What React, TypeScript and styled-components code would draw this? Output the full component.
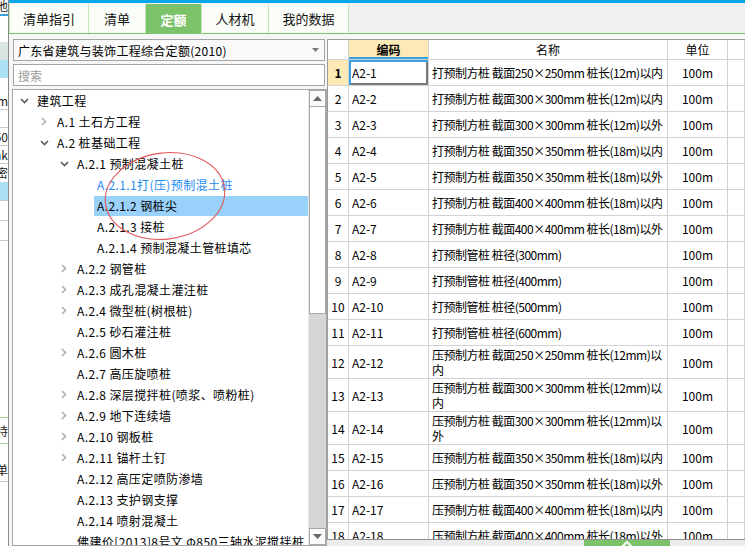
import * as React from 'react';
import styled, { createGlobalStyle } from 'styled-components';

const GlobalStyle = createGlobalStyle`
  html, body {
    margin: 0;
    padding: 0;
  }
  body {
    font-family: "Noto Sans CJK SC", "Liberation Sans", sans-serif;
    font-size: 12px;
    color: #000;
    background: #f0f0f0;
  }
  * {
    box-sizing: border-box;
  }
`;

const Screen = styled.div`
  position: relative;
  display: flex;
  width: 745px;
  height: 546px;
  overflow: hidden;
  background: #f0f0f0;
`;

/* sliver of the window behind, on the far left */
const Strip = styled.div`
  width: 9px;
  flex-shrink: 0;
  display: flex;
  flex-direction: column;
  overflow: hidden;
  background: #fff;
  border-right: 1px solid #8a8a8a;
`;

const StripCell = styled.div<{ $h: number; $bg?: string; $line?: string }>`
  height: ${(p) => p.$h}px;
  flex-shrink: 0;
  display: flex;
  justify-content: flex-end;
  align-items: center;
  background: ${(p) => p.$bg || 'transparent'};
  border-bottom: ${(p) => (p.$line ? `1px solid ${p.$line}` : 'none')};
  font-size: 12px;
  line-height: 12px;
  white-space: nowrap;
  color: #222;
  & > span {
    flex-shrink: 0;
  }
`;

const Main = styled.div`
  flex: 1;
  min-width: 0;
  display: flex;
  flex-direction: column;
`;

const TopBar = styled.div`
  height: 3px;
  flex-shrink: 0;
  background: #09a6ea;
`;

const TabBar = styled.div`
  display: flex;
  height: 31px;
  flex-shrink: 0;
  padding-top: 1px;
  background: #f0f0f0;
  border-bottom: 1px solid #78c463;
`;

const Tab = styled.div<{ $active?: boolean; $w: number }>`
  width: ${(p) => p.$w}px;
  display: flex;
  align-items: center;
  justify-content: center;
  font-size: 13px;
  font-weight: ${(p) => (p.$active ? 700 : 400)};
  color: ${(p) => (p.$active ? '#fff' : '#111')};
  background: ${(p) => (p.$active ? '#7cc268' : '#fafdf8')};
  border-right: 1px solid #c4e6b6;
  margin-bottom: ${(p) => (p.$active ? '-1px' : '0')};
  &:first-child {
    border-left: 1px solid #c4e6b6;
  }
`;

const Content = styled.div`
  flex: 1;
  min-height: 0;
  display: flex;
  background: #f6f6f6;
`;

const LeftPanel = styled.div`
  width: 318px;
  flex-shrink: 0;
  display: flex;
  flex-direction: column;
  gap: 3px;
  padding: 5px 0 0 3px;
`;

const Field = styled.div<{ $placeholder?: boolean }>`
  height: 22px;
  flex-shrink: 0;
  margin: 0 2px 0 1px;
  display: flex;
  align-items: center;
  justify-content: space-between;
  padding: 0 5px 0 4px;
  border: 1px solid #a5a5a5;
  background: ${(p) => (p.$placeholder ? '#fff' : '#f9f9f9')};
  color: ${(p) => (p.$placeholder ? '#9a9a9a' : '#000')};
  font-size: 12px;
  letter-spacing: ${(p) => (p.$placeholder ? 0 : 0.3)}px;
`;

const TreeBox = styled.div`
  flex: 1;
  min-height: 0;
  display: flex;
  border: 1px solid #a5a5a5;
  background: #fff;
`;

const TreeList = styled.div`
  flex: 1;
  min-width: 0;
  overflow: hidden;
`;

const TreeRow = styled.div<{ $level: number }>`
  height: 21px;
  display: flex;
  align-items: center;
  padding-left: ${(p) => 4 + p.$level * 20}px;
  white-space: nowrap;
`;

const Toggle = styled.span`
  width: 14px;
  height: 21px;
  flex-shrink: 0;
  display: flex;
  align-items: center;
  justify-content: center;
`;

const Label = styled.span<{ $tone?: 'link' | 'selected' }>`
  flex: 1;
  height: 20px;
  margin-left: 3px;
  padding-left: 3px;
  display: flex;
  align-items: center;
  font-size: 12px;
  letter-spacing: 0.4px;
  color: ${(p) => (p.$tone === 'link' ? '#1d8bf0' : '#000')};
  background: ${(p) => (p.$tone === 'selected' ? '#99d1fb' : 'transparent')};
`;

const ScrollBar = styled.div`
  width: 18px;
  flex-shrink: 0;
  display: flex;
  flex-direction: column;
  background: #d6d6d6;
  border-left: 1px solid #e8e8e8;
`;

const ScrollButton = styled.div`
  height: 17px;
  flex-shrink: 0;
  display: flex;
  align-items: center;
  justify-content: center;
  background: #fbfbfb;
  border: 1px solid #a8a8a8;
`;

const Thumb = styled.div`
  height: 207px;
  flex-shrink: 0;
  background: #fff;
  border: 1px solid #a8a8a8;
  border-top: none;
`;

const Track = styled.div`
  flex: 1;
`;

const TablePanel = styled.div`
  flex: 1;
  min-width: 0;
  display: flex;
  flex-direction: column;
  padding-top: 5px;
`;

const Grid = styled.div`
  flex: 1;
  min-height: 0;
  overflow: hidden;
  background: #fff;
  border-top: 1px solid #9c9c9c;
  border-left: 1px solid #9c9c9c;
`;

const Row = styled.div<{ $h: number }>`
  display: grid;
  grid-template-columns: 21px 80px 239px 60px 1fr;
  height: ${(p) => p.$h}px;
`;

const Cell = styled.div<{
  $align?: 'left' | 'center';
  $bg?: string;
  $bold?: boolean;
  $focus?: boolean;
  $underline?: boolean;
  $tight?: boolean;
}>`
  display: flex;
  align-items: center;
  justify-content: ${(p) => (p.$align === 'center' ? 'center' : 'flex-start')};
  padding-left: ${(p) => (p.$align === 'center' ? 0 : 3)}px;
  border-right: 1px solid #d2d2d2;
  border-bottom: 1px solid #d2d2d2;
  background: ${(p) => p.$bg || '#fff'};
  font-weight: ${(p) => (p.$bold ? 700 : 400)};
  font-size: 12px;
  line-height: 15px;
  letter-spacing: ${(p) => (p.$tight ? -0.5 : 0)}px;
  white-space: pre;
  overflow: hidden;
  box-shadow: ${(p) =>
    p.$focus
      ? 'inset 2px 2px 0 #3ba0e0, inset -2px -2px 0 #7a7a7a'
      : p.$underline
      ? 'inset 0 -2px 0 #3ba0e0'
      : 'none'};
`;

const Footer = styled.div`
  height: 7px;
  flex-shrink: 0;
  display: flex;
  padding-left: 257px;
  background: #ececec;
  border-top: 1px solid #8e8e8e;
`;

const FooterTab = styled.div`
  width: 86px;
  display: flex;
  justify-content: center;
  background: #7cc268;
  overflow: hidden;
`;

const Annotation = styled.svg`
  position: absolute;
  left: 100px;
  top: 148px;
  pointer-events: none;
`;

type TreeNode = {
  level: number;
  label: string;
  toggle?: 'open' | 'closed';
  tone?: 'link' | 'selected';
};

const tree: TreeNode[] = [
  { level: 0, label: '建筑工程', toggle: 'open' },
  { level: 1, label: 'A.1 土石方工程', toggle: 'closed' },
  { level: 1, label: 'A.2 桩基础工程', toggle: 'open' },
  { level: 2, label: 'A.2.1 预制混凝土桩', toggle: 'open' },
  { level: 3, label: 'A.2.1.1打(压)预制混土桩', tone: 'link' },
  { level: 3, label: 'A.2.1.2 钢桩尖', tone: 'selected' },
  { level: 3, label: 'A.2.1.3 接桩' },
  { level: 3, label: 'A.2.1.4 预制混凝土管桩填芯' },
  { level: 2, label: 'A.2.2 钢管桩', toggle: 'closed' },
  { level: 2, label: 'A.2.3 成孔混凝土灌注桩', toggle: 'closed' },
  { level: 2, label: 'A.2.4 微型桩(树根桩)', toggle: 'closed' },
  { level: 2, label: 'A.2.5 砂石灌注桩' },
  { level: 2, label: 'A.2.6 圆木桩', toggle: 'closed' },
  { level: 2, label: 'A.2.7 高压旋喷桩' },
  { level: 2, label: 'A.2.8 深层搅拌桩(喷浆、喷粉桩)', toggle: 'closed' },
  { level: 2, label: 'A.2.9 地下连续墙', toggle: 'closed' },
  { level: 2, label: 'A.2.10 钢板桩', toggle: 'closed' },
  { level: 2, label: 'A.2.11 锚杆土钉', toggle: 'closed' },
  { level: 2, label: 'A.2.12 高压定喷防渗墙' },
  { level: 2, label: 'A.2.13 支护钢支撑' },
  { level: 2, label: 'A.2.14 喷射混凝土' },
  { level: 2, label: '佛建价[2013]8号文 Φ850三轴水泥搅拌桩' },
];

type Quota = { code: string; name: string; tall?: boolean };

const quotas: Quota[] = [
  { code: 'A2-1', name: '打预制方桩 截面250×250mm 桩长(12m)以内' },
  { code: 'A2-2', name: '打预制方桩 截面300×300mm 桩长(12m)以内' },
  { code: 'A2-3', name: '打预制方桩 截面300×300mm 桩长(12m)以外' },
  { code: 'A2-4', name: '打预制方桩 截面350×350mm 桩长(18m)以内' },
  { code: 'A2-5', name: '打预制方桩 截面350×350mm 桩长(18m)以外' },
  { code: 'A2-6', name: '打预制方桩 截面400×400mm 桩长(18m)以内' },
  { code: 'A2-7', name: '打预制方桩 截面400×400mm 桩长(18m)以外' },
  { code: 'A2-8', name: '打预制管桩 桩径(300mm)' },
  { code: 'A2-9', name: '打预制管桩 桩径(400mm)' },
  { code: 'A2-10', name: '打预制管桩 桩径(500mm)' },
  { code: 'A2-11', name: '打预制管桩 桩径(600mm)' },
  { code: 'A2-12', name: '压预制方桩 截面250×250mm 桩长(12mm)以\n内', tall: true },
  { code: 'A2-13', name: '压预制方桩 截面300×300mm 桩长(12mm)以\n内', tall: true },
  { code: 'A2-14', name: '压预制方桩 截面300×300mm 桩长(12mm)以\n外', tall: true },
  { code: 'A2-15', name: '压预制方桩 截面350×350mm 桩长(18m)以内' },
  { code: 'A2-16', name: '压预制方桩 截面350×350mm 桩长(18m)以外' },
  { code: 'A2-17', name: '压预制方桩 截面400×400mm 桩长(18m)以内' },
  { code: 'A2-18', name: '压预制方桩 截面400×400mm 桩长(18m)以外' },
];

const tabs = [
  { label: '清单指引', w: 80 },
  { label: '清单', w: 57 },
  { label: '定额', w: 56, active: true },
  { label: '人材机', w: 67 },
  { label: '我的数据', w: 80 },
];

const Chevron = ({ open }: { open: boolean }) =>
  open ? (
    <svg width="9" height="6" viewBox="0 0 9 6">
      <polyline points="1,1 4.5,4.5 8,1" fill="none" stroke="#5a5a5a" strokeWidth="1.6" />
    </svg>
  ) : (
    <svg width="6" height="9" viewBox="0 0 6 9">
      <polyline points="1,1 4.5,4.5 1,8" fill="none" stroke="#b0b0b0" strokeWidth="1.6" />
    </svg>
  );

const Arrow = ({ up, color = '#666', w = 9 }: { up?: boolean; color?: string; w?: number }) => (
  <svg width={w} height={w / 2 + 0.5} viewBox="0 0 9 5">
    <polygon points={up ? '0,5 4.5,0 9,5' : '0,0 9,0 4.5,5'} fill={color} />
  </svg>
);

const App = () => {
  return (
    <Screen>
      <GlobalStyle />
      <Strip>
        <StripCell $h={12}>
          <span>其他</span>
        </StripCell>
        <StripCell $h={2} />
        <StripCell $h={2} $bg="#3aa0e0" />
        <StripCell $h={26} />
        <StripCell $h={18} $bg="#dae4e0" />
        <StripCell $h={18} $bg="#ade2f4" />
        <StripCell $h={14} />
        <StripCell $h={18} $line="#c9c9c9">
          <span>mm</span>
        </StripCell>
        <StripCell $h={18} $line="#c9c9c9" />
        <StripCell $h={18} $line="#c9c9c9">
          <span>50</span>
        </StripCell>
        <StripCell $h={18} $line="#c9c9c9">
          <span>nk</span>
        </StripCell>
        <StripCell $h={18}>
          <span>密</span>
        </StripCell>
        <StripCell $h={19} $bg="#ade2f4" $line="#c9c9c9" />
        <StripCell $h={20} $line="#c9c9c9" />
        <StripCell $h={20} $line="#c9c9c9" />
        <StripCell $h={177} $line="#9fd68d" />
        <StripCell $h={26} $line="#9fd68d">
          <span>持</span>
        </StripCell>
        <StripCell $h={14} />
        <StripCell $h={24} $line="#c9c9c9">
          <span>单</span>
        </StripCell>
      </Strip>

      <Main>
        <TopBar />
        <TabBar>
          {tabs.map((t) => (
            <Tab key={t.label} $active={t.active} $w={t.w}>
              {t.label}
            </Tab>
          ))}
        </TabBar>

        <Content>
          <LeftPanel>
            <Field>
              <span>广东省建筑与装饰工程综合定额(2010)</span>
              <Arrow color="#7a7a7a" w={7} />
            </Field>
            <Field $placeholder>搜索</Field>
            <TreeBox>
              <TreeList>
                {tree.map((n) => (
                  <TreeRow key={n.label} $level={n.level}>
                    <Toggle>{n.toggle && <Chevron open={n.toggle === 'open'} />}</Toggle>
                    <Label $tone={n.tone}>{n.label}</Label>
                  </TreeRow>
                ))}
              </TreeList>
              <ScrollBar>
                <ScrollButton>
                  <Arrow up />
                </ScrollButton>
                <Thumb />
                <Track />
                <ScrollButton>
                  <Arrow />
                </ScrollButton>
              </ScrollBar>
            </TreeBox>
          </LeftPanel>

          <TablePanel>
            <Grid>
              <Row $h={20}>
                <Cell />
                <Cell $align="center" $bg="#fde9b6" $bold $underline>
                  编码
                </Cell>
                <Cell $align="center">名称</Cell>
                <Cell $align="center">单位</Cell>
                <Cell />
              </Row>
              {quotas.map((q, i) => (
                <Row key={q.code} $h={q.tall ? 33 : 26}>
                  <Cell $align="center" $bg={i === 0 ? '#fde9b6' : undefined} $bold={i === 0}>
                    {i + 1}
                  </Cell>
                  <Cell $focus={i === 0}>{q.code}</Cell>
                  <Cell $tight>{q.name}</Cell>
                  <Cell $align="center">100m</Cell>
                  <Cell />
                </Row>
              ))}
            </Grid>
            <Footer>
              <FooterTab>
                <svg width="14" height="7" viewBox="0 0 14 7">
                  <polyline points="2,7 7,2 12,7" fill="none" stroke="#fff" strokeWidth="2" />
                </svg>
              </FooterTab>
            </Footer>
          </TablePanel>
        </Content>
      </Main>

      <Annotation width="130" height="96" viewBox="0 0 130 96">
        <ellipse
          cx="65"
          cy="48"
          rx="60"
          ry="43"
          fill="none"
          stroke="#e4585a"
          strokeWidth="1.1"
          transform="rotate(-8 65 48)"
        />
      </Annotation>
    </Screen>
  );
};

export default App;
